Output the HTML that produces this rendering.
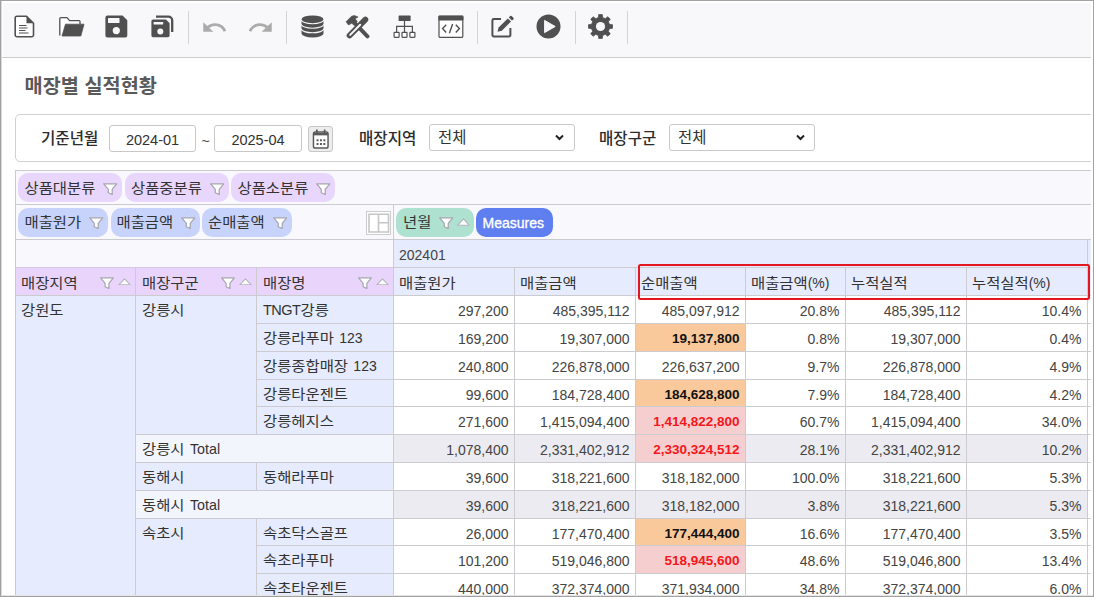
<!DOCTYPE html>
<html lang="ko"><head><meta charset="utf-8"><title>매장별 실적현황</title>
<style>
*{box-sizing:border-box;margin:0;padding:0}
html,body{width:1094px;height:597px;overflow:hidden;background:#fff}
body{position:relative;font-family:"Liberation Sans","Noto Sans CJK KR",sans-serif;font-size:14px;color:#333}
div,svg{position:absolute}
.h{display:inline-block;transform:scaleY(.91)}
.k{font-size:15.4px}
.num{text-align:right;font-size:14px;color:#444}
.b{font-weight:bold}
</style></head>
<body>
<div style="left:3px;top:3px;width:1088px;height:54px;background:#f8f8fa;"></div>
<div style="left:0px;top:57px;width:1094px;height:1px;background:#cdcdcd"></div>
<svg style="left:14px;top:15px;" width="21" height="23" viewBox="0 0 21 23" preserveAspectRatio="none">
<path d="M3 1.2 H12.5 L19.5 8.2 V20 a1.8 1.8 0 0 1 -1.8 1.8 H3 a1.8 1.8 0 0 1 -1.8 -1.8 V3 A1.8 1.8 0 0 1 3 1.2 Z" fill="#fff" stroke="#505050" stroke-width="1.6" stroke-linejoin="round"/>
<path d="M12.5 1.2 L19.5 8.2 H12.5 Z" fill="#505050"/>
<path d="M5 10.5 H12.5 M5 13 H13.5 M5 15.5 H11.5 M5 18 H14.5" stroke="#505050" stroke-width="1.1" fill="none"/></svg>
<svg style="left:58px;top:16px;" width="27" height="21" viewBox="0 0 27 21" preserveAspectRatio="none">
<path d="M1.8 19.5 V2.6 a1 1 0 0 1 1 -1 H9 l2.6 3 H21 a1 1 0 0 1 1 1 V8" fill="#fff" stroke="#505050" stroke-width="1.3" stroke-linejoin="round"/>
<path d="M7.5 8.2 H26 L22.8 20 H4 Z" fill="#505050" stroke="#505050" stroke-width="0.8" stroke-linejoin="round"/></svg>
<svg style="left:105px;top:15px;" width="23" height="23" viewBox="0 0 23 23" preserveAspectRatio="none">
<path d="M2.4 0.5 H17.5 L22.3 5.3 V20.4 a2 2 0 0 1 -2 2 H2.4 a2 2 0 0 1 -2 -2 V2.5 a2 2 0 0 1 2 -2 Z" fill="#505050"/>
<rect x="3" y="3" width="11.5" height="5" rx="0.6" fill="#f7f7f9"/>
<circle cx="11.3" cy="15.6" r="3.6" fill="#f7f7f9"/></svg>
<svg style="left:151px;top:15px;" width="23" height="23" viewBox="0 0 23 23" preserveAspectRatio="none">
<path d="M5 1.600 H17.400 a3.800 3.800 0 0 1 3.800 3.800 V17" fill="none" stroke="#505050" stroke-width="2.300"/>
<path d="M2 4.6 H15 L18.6 8.2 V20.6 a1.6 1.6 0 0 1 -1.6 1.6 H2 a1.6 1.6 0 0 1 -1.6 -1.6 V6.2 a1.6 1.6 0 0 1 1.6 -1.6 Z" fill="#505050"/>
<rect x="2.6" y="7" width="9.6" height="2.6" rx="0.4" fill="#f7f7f9"/>
<circle cx="9.3" cy="16.6" r="3" fill="#f7f7f9"/></svg>
<div style="left:188px;top:11px;width:1px;height:33px;background:#d4d4d6"></div>
<div style="left:286px;top:11px;width:1px;height:33px;background:#d4d4d6"></div>
<div style="left:477px;top:11px;width:1px;height:33px;background:#d4d4d6"></div>
<div style="left:575px;top:11px;width:1px;height:33px;background:#d4d4d6"></div>
<div style="left:627px;top:11px;width:1px;height:33px;background:#d4d4d6"></div>
<svg style="left:200.5px;top:14.5px;" width="27" height="25" viewBox="0 0 24 24" preserveAspectRatio="none"><path d="M12.5 8c-2.65 0-5.05.99-6.9 2.6L2 7v9h9l-3.62-3.62c1.39-1.16 3.16-1.88 5.12-1.88 3.54 0 6.55 2.31 7.6 5.5l2.37-.78C21.08 11.03 17.15 8 12.500 8z" fill="#ababab"/></svg>
<svg style="left:247.2px;top:14.5px;" width="27" height="25" viewBox="0 0 24 24" preserveAspectRatio="none"><path d="M18.4 10.6C16.55 8.99 14.15 8 11.5 8c-4.65 0-8.580 3.03-9.960 7.220L3.900 16c1.050-3.190 4.050-5.500 7.600-5.500 1.950 0 3.730.720 5.120 1.880L13 16h9V7l-3.600 3.600z" fill="#ababab"/></svg>
<svg style="left:301px;top:15px;" width="23" height="23" viewBox="0 0 23 23" preserveAspectRatio="none">
<path d="M0.500 4.400 a11 4 0 0 1 22 0 V18.400 a11 4 0 0 1 -22 0 Z" fill="#505050"/>
<path d="M0.300 4.700 a11.200 4 0 0 0 22.400 0 M0.300 9.200 a11.200 4 0 0 0 22.400 0 M0.300 13.800 a11.200 4 0 0 0 22.400 0" fill="none" stroke="#f7f7f9" stroke-width="1.100"/></svg>
<svg style="left:344.5px;top:14.6px;" width="26" height="24" viewBox="0 0 25 23" preserveAspectRatio="none">
<path d="M9.800 8.200 L21.600 20.400" stroke="#505050" stroke-width="3.800" stroke-linecap="round"/>
<path d="M1 6.500 L6.300 1.200 L9 0.500 L12.600 1.900 L9.700 3.700 L11.800 6 L8.600 9.700 L6.500 7.900 L3.400 9.600 Z" fill="#505050" stroke="#505050" stroke-width="0.600" stroke-linejoin="round"/>
<path d="M4.400 19.600 L19.600 4.400" stroke="#505050" stroke-width="5.600" stroke-linecap="round"/>
<path d="M5 19 L14.600 9.400" stroke="#f7f7f9" stroke-width="1.900" stroke-linecap="round"/></svg>
<svg style="left:393px;top:15px;" width="23" height="23" viewBox="0 0 23 23" preserveAspectRatio="none">
<rect x="5.600" y="0.600" width="12" height="5.400" rx="0.600" fill="#505050"/>
<path d="M11.500 6 V17 M3.600 17 V11.300 H19.400 V17" fill="none" stroke="#505050" stroke-width="1.200"/>
<rect x="1.100" y="17.300" width="5" height="5" rx="0.500" fill="#fff" stroke="#505050" stroke-width="1.200"/>
<rect x="9" y="17.300" width="5" height="5" rx="0.500" fill="#fff" stroke="#505050" stroke-width="1.200"/>
<rect x="16.900" y="17.300" width="5" height="5" rx="0.500" fill="#fff" stroke="#505050" stroke-width="1.200"/></svg>
<svg style="left:438px;top:15px;" width="26" height="23" viewBox="0 0 26 23" preserveAspectRatio="none">
<rect x="1" y="1.300" width="23.800" height="21" rx="0.800" fill="#fff" stroke="#505050" stroke-width="1.200"/>
<rect x="0.400" y="0.600" width="25" height="5" rx="0.800" fill="#505050"/>
<path d="M8.200 9.800 L4.600 13.600 L8.200 17.400 M17.800 9.800 L21.400 13.600 L17.800 17.400 M14.600 9 L11.400 18.200" fill="none" stroke="#505050" stroke-width="1.400"/></svg>
<svg style="left:491px;top:15px;" width="24" height="23" viewBox="0 0 24 23" preserveAspectRatio="none">
<path d="M10 4 H2.800 a1.400 1.400 0 0 0 -1.400 1.400 V20 a1.400 1.400 0 0 0 1.400 1.400 H18 a1.400 1.400 0 0 0 1.400 -1.400 V13" fill="none" stroke="#505050" stroke-width="2"/>
<path d="M6.500 16.800 L7.600 12.600 L16.800 3.400 L20 6.600 L10.800 15.800 Z" fill="#505050"/>
<path d="M17.800 2.400 L19.200 1 a1 1 0 0 1 1.400 0 L22.400 2.800 a1 1 0 0 1 0 1.400 L21 5.600 Z" fill="#505050"/></svg>
<svg style="left:536px;top:14px;" width="25" height="25" viewBox="0 0 25 25" preserveAspectRatio="none">
<circle cx="12.500" cy="12.500" r="12" fill="#505050"/>
<path d="M8.600 6.400 L19.200 12.500 L8.600 18.600 Z" fill="#f7f7f9" stroke="#f7f7f9" stroke-width="1" stroke-linejoin="round"/></svg>
<svg style="left:588px;top:14px;" width="25" height="25" viewBox="0 0 25 25" preserveAspectRatio="none">
<path d="M10.35 3.55 L10.78 0.42 L14.22 0.42 L14.65 3.55 L17.31 4.66 L19.83 2.74 L22.26 5.17 L20.34 7.69 L21.45 10.35 L24.58 10.78 L24.58 14.22 L21.45 14.65 L20.34 17.31 L22.26 19.83 L19.83 22.26 L17.31 20.34 L14.65 21.45 L14.22 24.58 L10.78 24.58 L10.35 21.45 L7.69 20.34 L5.17 22.26 L2.74 19.83 L4.66 17.31 L3.55 14.65 L0.42 14.22 L0.42 10.78 L3.55 10.35 L4.66 7.69 L2.74 5.17 L5.17 2.74 L7.69 4.66 Z" fill="#505050" stroke="#505050" stroke-width="0.800" stroke-linejoin="round"/>
<circle cx="12.500" cy="12.500" r="4.600" fill="#f7f7f9"/></svg>
<div class="b" style="left:24.6px;top:72px;height:28px;line-height:28px;white-space:nowrap;font-size:19.700px;color:#5a5a5a;">매장별 실적현황</div>
<div style="left:15px;top:114px;width:1090px;height:48px;background:#fff;border:1px solid #d0d0d0;border-radius:5px;"></div>
<div class="" style="left:41px;top:125px;height:28px;line-height:28px;white-space:nowrap;font-weight:500;font-size:15.600px;color:#2c2c2c;">기준년월</div>
<div style="left:109px;top:125px;width:87px;height:27px;border:1px solid #c8c8c8;border-radius:3px;background:#fff;"></div>
<div class="" style="left:109px;top:126px;height:28px;line-height:28px;white-space:nowrap;width:87px;font-size:14.500px;text-align:center;color:#333;">2024-01</div>
<div class="" style="left:201.5px;top:127px;height:28px;line-height:28px;white-space:nowrap;font-size:14px;color:#444;">~</div>
<div style="left:214px;top:125px;width:88px;height:27px;border:1px solid #c8c8c8;border-radius:3px;background:#fff;"></div>
<div class="" style="left:214px;top:126px;height:28px;line-height:28px;white-space:nowrap;width:88px;font-size:14.500px;text-align:center;color:#333;">2025-04</div>
<div style="left:308px;top:126px;width:25px;height:26px;background:#ededed;border:1px solid #c6c6c6;border-radius:3px;"></div>
<svg style="left:311.5px;top:129px;" width="17.5" height="20.5" viewBox="0 0 18 20" preserveAspectRatio="none">
<rect x="1.500" y="3" width="15" height="15.600" rx="1.800" fill="#fff" stroke="#5a5a5a" stroke-width="1.500"/>
<path d="M1.500 5 H16.500" stroke="#5a5a5a" stroke-width="2.400"/>
<path d="M5 0.600 V4 M13 0.600 V4" stroke="#5a5a5a" stroke-width="1.800"/>
<path d="M4.700 11 H14 M4.700 14.700 H14" stroke="#5a5a5a" stroke-width="2" stroke-dasharray="2 1.500"/></svg>
<div class="" style="left:359px;top:125px;height:28px;line-height:28px;white-space:nowrap;font-weight:500;font-size:15.600px;color:#2c2c2c;">매장지역</div>
<div style="left:429px;top:124px;width:146px;height:27px;border:1px solid #c8c8c8;border-radius:3px;background:#fff;"></div>
<div class="" style="left:438px;top:124px;height:27px;line-height:27px;white-space:nowrap;font-size:15.4px;color:#333;">전체</div>
<svg style="left:554px;top:133px;" width="11" height="9" viewBox="0 0 11 9" preserveAspectRatio="none"><path d="M2 2.500 L5.500 6 L9 2.500" fill="none" stroke="#222" stroke-width="2"/></svg>
<div class="" style="left:599px;top:125px;height:28px;line-height:28px;white-space:nowrap;font-weight:500;font-size:15.600px;color:#2c2c2c;">매장구군</div>
<div style="left:669px;top:124px;width:146px;height:27px;border:1px solid #c8c8c8;border-radius:3px;background:#fff;"></div>
<div class="" style="left:678px;top:124px;height:27px;line-height:27px;white-space:nowrap;font-size:15.4px;color:#333;">전체</div>
<svg style="left:795px;top:133px;" width="11" height="9" viewBox="0 0 11 9" preserveAspectRatio="none"><path d="M2 2.500 L5.500 6 L9 2.500" fill="none" stroke="#222" stroke-width="2"/></svg>
<div style="left:15px;top:170px;width:1078px;height:426px;background:#f9f9fd;"></div>
<div style="left:394px;top:240px;width:699px;height:55px;background:#e6ebfd;"></div>
<div style="left:16px;top:268px;width:377px;height:27px;background:#e9d5fc;"></div>
<div style="left:16px;top:296px;width:377px;height:300px;background:#e6ecfd;"></div>
<div style="left:394px;top:296px;width:699px;height:300px;background:#fff;"></div>
<div style="left:18px;top:173px;width:104px;height:29px;line-height:30px;background:#e9d6fc;color:#333;padding-left:6.5px;border-radius:10px;white-space:nowrap;"><span style="font-size:15.4px"><span class="h">상품대분류</span></span><svg style="position:static;vertical-align:-2px;margin-left:8px" width="14.5" height="12.5" viewBox="0 0 14 12.500" preserveAspectRatio="none"><path d="M0.700 0.800 H13.300 L8.900 6.300 V11.500 L5.100 9.700 V6.300 Z" fill="#fff" stroke="#a6a6ae" stroke-width="1.200" stroke-linejoin="round"/></svg></div>
<div style="left:124.5px;top:173px;width:104px;height:29px;line-height:30px;background:#e9d6fc;color:#333;padding-left:6.5px;border-radius:10px;white-space:nowrap;"><span style="font-size:15.4px"><span class="h">상품중분류</span></span><svg style="position:static;vertical-align:-2px;margin-left:8px" width="14.5" height="12.5" viewBox="0 0 14 12.500" preserveAspectRatio="none"><path d="M0.700 0.800 H13.300 L8.900 6.300 V11.500 L5.100 9.700 V6.300 Z" fill="#fff" stroke="#a6a6ae" stroke-width="1.200" stroke-linejoin="round"/></svg></div>
<div style="left:231px;top:173px;width:104px;height:29px;line-height:30px;background:#e9d6fc;color:#333;padding-left:6.5px;border-radius:10px;white-space:nowrap;"><span style="font-size:15.4px"><span class="h">상품소분류</span></span><svg style="position:static;vertical-align:-2px;margin-left:8px" width="14.5" height="12.5" viewBox="0 0 14 12.500" preserveAspectRatio="none"><path d="M0.700 0.800 H13.300 L8.900 6.300 V11.500 L5.100 9.700 V6.300 Z" fill="#fff" stroke="#a6a6ae" stroke-width="1.200" stroke-linejoin="round"/></svg></div>
<div style="left:18px;top:208px;width:89.5px;height:29px;line-height:28px;background:#c8d3fb;color:#333;padding-left:6.5px;border-radius:10px;white-space:nowrap;"><span style="font-size:15.4px"><span class="h">매출원가</span></span><svg style="position:static;vertical-align:-2px;margin-left:8px" width="14.5" height="12.5" viewBox="0 0 14 12.500" preserveAspectRatio="none"><path d="M0.700 0.800 H13.300 L8.900 6.300 V11.500 L5.100 9.700 V6.300 Z" fill="#fff" stroke="#a6a6ae" stroke-width="1.200" stroke-linejoin="round"/></svg></div>
<div style="left:110.5px;top:208px;width:89px;height:29px;line-height:28px;background:#c8d3fb;color:#333;padding-left:6px;border-radius:10px;white-space:nowrap;"><span style="font-size:15.4px"><span class="h">매출금액</span></span><svg style="position:static;vertical-align:-2px;margin-left:8px" width="14.5" height="12.5" viewBox="0 0 14 12.500" preserveAspectRatio="none"><path d="M0.700 0.800 H13.300 L8.900 6.300 V11.500 L5.100 9.700 V6.300 Z" fill="#fff" stroke="#a6a6ae" stroke-width="1.200" stroke-linejoin="round"/></svg></div>
<div style="left:202px;top:208px;width:90px;height:29px;line-height:28px;background:#c8d3fb;color:#333;padding-left:6px;border-radius:10px;white-space:nowrap;"><span style="font-size:15.4px"><span class="h">순매출액</span></span><svg style="position:static;vertical-align:-2px;margin-left:8px" width="14.5" height="12.5" viewBox="0 0 14 12.500" preserveAspectRatio="none"><path d="M0.700 0.800 H13.300 L8.900 6.300 V11.500 L5.100 9.700 V6.300 Z" fill="#fff" stroke="#a6a6ae" stroke-width="1.200" stroke-linejoin="round"/></svg></div>
<svg style="left:366px;top:211px;" width="25" height="24" viewBox="0 0 25 24" preserveAspectRatio="none"><rect x="0.500" y="0.500" width="24" height="23" fill="#fff" stroke="#cdcdcd" stroke-width="1"/>
<path d="M3 3.200 H22.500 V21 H3 Z M12.500 3.200 V21 M12.500 11.700 H22.500" fill="none" stroke="#c6c6c6" stroke-width="1.600"/></svg>
<div style="left:396px;top:208px;width:78px;height:29px;line-height:28px;background:#afe1d1;color:#333;padding-left:7px;border-radius:10px;white-space:nowrap;"><span style="font-size:15.4px"><span class="h">년월</span></span><svg style="position:static;vertical-align:-2px;margin-left:8px" width="14.5" height="12.5" viewBox="0 0 14 12.500" preserveAspectRatio="none"><path d="M0.700 0.800 H13.300 L8.900 6.300 V11.500 L5.100 9.700 V6.300 Z" fill="#fff" stroke="#a6a6ae" stroke-width="1.200" stroke-linejoin="round"/></svg><svg style="position:static;vertical-align:1px;margin-left:3px" width="13" height="8" viewBox="0 0 13 8" preserveAspectRatio="none"><path d="M0.800 7.200 L6.500 0.900 L12.200 7.200 Z" fill="#fff" stroke="#b4b4bc" stroke-width="1.100" stroke-linejoin="round"/></svg></div>
<div style="left:476px;top:208px;width:77px;height:29px;line-height:31px;background:#5f7ef0;color:#fff;padding-left:6.5px;border-radius:10px;white-space:nowrap;-webkit-text-stroke:0.350px #fff;"><span style="font-size:14px">Measures</span></div>
<div style="left:15px;top:170px;width:1078px;height:1px;background:#cbcbd0"></div>
<div style="left:15px;top:204px;width:1078px;height:1px;background:#cbcbd0"></div>
<div style="left:15px;top:239px;width:1078px;height:1px;background:#cbcbd0"></div>
<div style="left:393px;top:267px;width:700px;height:1px;background:#cbcbd0"></div>
<div style="left:15px;top:267px;width:378px;height:1px;background:#d5c8e2"></div>
<div style="left:15px;top:295px;width:1078px;height:1px;background:#cbcbd0"></div>
<div style="left:15px;top:170px;width:1px;height:426px;background:#cbcbd0"></div>
<div style="left:393px;top:204px;width:1px;height:392px;background:#cbcbd0"></div>
<div style="left:1087px;top:239px;width:1px;height:357px;background:#cbcbd0"></div>
<div style="left:514px;top:268px;width:1px;height:328px;background:#cbcbd0"></div>
<div style="left:635px;top:268px;width:1px;height:328px;background:#cbcbd0"></div>
<div style="left:745px;top:268px;width:1px;height:328px;background:#cbcbd0"></div>
<div style="left:845px;top:268px;width:1px;height:328px;background:#cbcbd0"></div>
<div style="left:966px;top:268px;width:1px;height:328px;background:#cbcbd0"></div>
<div style="left:135px;top:268px;width:1px;height:28px;background:#cbcbd0"></div>
<div style="left:256px;top:268px;width:1px;height:28px;background:#cbcbd0"></div>
<div class="" style="left:399px;top:240px;height:31px;line-height:31px;white-space:nowrap;font-size:14px;color:#444;">202401</div>
<div class="k" style="left:399px;top:268px;height:30px;line-height:30px;white-space:nowrap;"><span class="h">매출원가</span></div>
<div class="k" style="left:520px;top:268px;height:30px;line-height:30px;white-space:nowrap;"><span class="h">매출금액</span></div>
<div class="k" style="left:641px;top:268px;height:30px;line-height:30px;white-space:nowrap;"><span class="h">순매출액</span></div>
<div class="k" style="left:751px;top:268px;height:30px;line-height:30px;white-space:nowrap;"><span class="h">매출금액</span><span style="font-size:14px">(%)</span></div>
<div class="k" style="left:851px;top:268px;height:30px;line-height:30px;white-space:nowrap;"><span class="h">누적실적</span></div>
<div class="k" style="left:972px;top:268px;height:30px;line-height:30px;white-space:nowrap;"><span class="h">누적실적</span><span style="font-size:14px">(%)</span></div>
<div class="k" style="left:21px;top:268px;height:30px;line-height:30px;white-space:nowrap;"><span class="h">매장지역</span></div>
<div style="left:99.7px;top:268px;height:28px;line-height:29px;white-space:nowrap"><svg style="position:static;vertical-align:-2px;margin-left:0px" width="14" height="12.5" viewBox="0 0 14 12.500" preserveAspectRatio="none"><path d="M0.700 0.800 H13.300 L8.900 6.300 V11.500 L5.100 9.700 V6.300 Z" fill="#fff" stroke="#a6a6ae" stroke-width="1.200" stroke-linejoin="round"/></svg><svg style="position:static;vertical-align:2px;margin-left:4px" width="13" height="7.5" viewBox="0 0 13 8" preserveAspectRatio="none"><path d="M0.800 7.200 L6.500 0.900 L12.200 7.200 Z" fill="#fff" stroke="#b4b4bc" stroke-width="1.100" stroke-linejoin="round"/></svg></div>
<div class="k" style="left:142px;top:268px;height:30px;line-height:30px;white-space:nowrap;"><span class="h">매장구군</span></div>
<div style="left:220.7px;top:268px;height:28px;line-height:29px;white-space:nowrap"><svg style="position:static;vertical-align:-2px;margin-left:0px" width="14" height="12.5" viewBox="0 0 14 12.500" preserveAspectRatio="none"><path d="M0.700 0.800 H13.300 L8.900 6.300 V11.500 L5.100 9.700 V6.300 Z" fill="#fff" stroke="#a6a6ae" stroke-width="1.200" stroke-linejoin="round"/></svg><svg style="position:static;vertical-align:2px;margin-left:4px" width="13" height="7.5" viewBox="0 0 13 8" preserveAspectRatio="none"><path d="M0.800 7.200 L6.500 0.900 L12.200 7.200 Z" fill="#fff" stroke="#b4b4bc" stroke-width="1.100" stroke-linejoin="round"/></svg></div>
<div class="k" style="left:263px;top:268px;height:30px;line-height:30px;white-space:nowrap;"><span class="h">매장명</span></div>
<div style="left:357.7px;top:268px;height:28px;line-height:29px;white-space:nowrap"><svg style="position:static;vertical-align:-2px;margin-left:0px" width="14" height="12.5" viewBox="0 0 14 12.500" preserveAspectRatio="none"><path d="M0.700 0.800 H13.300 L8.900 6.300 V11.500 L5.100 9.700 V6.300 Z" fill="#fff" stroke="#a6a6ae" stroke-width="1.200" stroke-linejoin="round"/></svg><svg style="position:static;vertical-align:2px;margin-left:4px" width="13" height="7.5" viewBox="0 0 13 8" preserveAspectRatio="none"><path d="M0.800 7.200 L6.500 0.900 L12.200 7.200 Z" fill="#fff" stroke="#b4b4bc" stroke-width="1.100" stroke-linejoin="round"/></svg></div>
<div class="k" style="left:263px;top:296px;height:28px;line-height:28px;white-space:nowrap;"><span style="font-size:14.500px;letter-spacing:-0.500px">TNGT</span><span class="h">강릉</span></div>
<div style="left:256px;top:295px;width:837px;height:1px;background:#cbcbd0"></div>
<div class="num" style="left:394px;top:297px;height:28px;line-height:28px;white-space:nowrap;width:114.5px;">297,200</div>
<div class="num" style="left:515px;top:297px;height:28px;line-height:28px;white-space:nowrap;width:114.5px;">485,395,112</div>
<div class="num" style="left:636px;top:297px;height:28px;line-height:28px;white-space:nowrap;width:103.5px;">485,097,912</div>
<div class="num" style="left:746px;top:297px;height:28px;line-height:28px;white-space:nowrap;width:93.5px;">20.8%</div>
<div class="num" style="left:846px;top:297px;height:28px;line-height:28px;white-space:nowrap;width:114.5px;">485,395,112</div>
<div class="num" style="left:967px;top:297px;height:28px;line-height:28px;white-space:nowrap;width:114.5px;">10.4%</div>
<div class="k" style="left:263px;top:324px;height:28px;line-height:28px;white-space:nowrap;"><span class="h">강릉라푸마</span><span style="font-size:14px;word-spacing:1.500px"> 123</span></div>
<div style="left:256px;top:323px;width:837px;height:1px;background:#cbcbd0"></div>
<div style="left:636px;top:324px;width:109px;height:27px;background:#f9c99b;"></div>
<div class="num" style="left:394px;top:325px;height:28px;line-height:28px;white-space:nowrap;width:114.5px;">169,200</div>
<div class="num" style="left:515px;top:325px;height:28px;line-height:28px;white-space:nowrap;width:114.5px;">19,307,000</div>
<div class="num b" style="left:636px;top:325px;height:28px;line-height:28px;white-space:nowrap;width:103.5px;color:#111;font-size:13.500px;">19,137,800</div>
<div class="num" style="left:746px;top:325px;height:28px;line-height:28px;white-space:nowrap;width:93.5px;">0.8%</div>
<div class="num" style="left:846px;top:325px;height:28px;line-height:28px;white-space:nowrap;width:114.5px;">19,307,000</div>
<div class="num" style="left:967px;top:325px;height:28px;line-height:28px;white-space:nowrap;width:114.5px;">0.4%</div>
<div class="k" style="left:263px;top:352px;height:28px;line-height:28px;white-space:nowrap;"><span class="h">강릉종합매장</span><span style="font-size:14px;word-spacing:1.500px"> 123</span></div>
<div style="left:256px;top:351px;width:837px;height:1px;background:#cbcbd0"></div>
<div class="num" style="left:394px;top:353px;height:28px;line-height:28px;white-space:nowrap;width:114.5px;">240,800</div>
<div class="num" style="left:515px;top:353px;height:28px;line-height:28px;white-space:nowrap;width:114.5px;">226,878,000</div>
<div class="num" style="left:636px;top:353px;height:28px;line-height:28px;white-space:nowrap;width:103.5px;">226,637,200</div>
<div class="num" style="left:746px;top:353px;height:28px;line-height:28px;white-space:nowrap;width:93.5px;">9.7%</div>
<div class="num" style="left:846px;top:353px;height:28px;line-height:28px;white-space:nowrap;width:114.5px;">226,878,000</div>
<div class="num" style="left:967px;top:353px;height:28px;line-height:28px;white-space:nowrap;width:114.5px;">4.9%</div>
<div class="k" style="left:263px;top:380px;height:28px;line-height:28px;white-space:nowrap;"><span class="h">강릉타운젠트</span></div>
<div style="left:256px;top:379px;width:837px;height:1px;background:#cbcbd0"></div>
<div style="left:636px;top:380px;width:109px;height:26px;background:#f9c99b;"></div>
<div class="num" style="left:394px;top:381px;height:28px;line-height:28px;white-space:nowrap;width:114.5px;">99,600</div>
<div class="num" style="left:515px;top:381px;height:28px;line-height:28px;white-space:nowrap;width:114.5px;">184,728,400</div>
<div class="num b" style="left:636px;top:381px;height:28px;line-height:28px;white-space:nowrap;width:103.5px;color:#111;font-size:13.500px;">184,628,800</div>
<div class="num" style="left:746px;top:381px;height:28px;line-height:28px;white-space:nowrap;width:93.5px;">7.9%</div>
<div class="num" style="left:846px;top:381px;height:28px;line-height:28px;white-space:nowrap;width:114.5px;">184,728,400</div>
<div class="num" style="left:967px;top:381px;height:28px;line-height:28px;white-space:nowrap;width:114.5px;">4.2%</div>
<div class="k" style="left:263px;top:407px;height:28px;line-height:28px;white-space:nowrap;"><span class="h">강릉헤지스</span></div>
<div style="left:256px;top:406px;width:837px;height:1px;background:#cbcbd0"></div>
<div style="left:636px;top:407px;width:109px;height:27px;background:#f5cfd0;"></div>
<div class="num" style="left:394px;top:408px;height:28px;line-height:28px;white-space:nowrap;width:114.5px;">271,600</div>
<div class="num" style="left:515px;top:408px;height:28px;line-height:28px;white-space:nowrap;width:114.5px;">1,415,094,400</div>
<div class="num b" style="left:636px;top:408px;height:28px;line-height:28px;white-space:nowrap;width:103.5px;color:#f6161b;font-size:13.500px;">1,414,822,800</div>
<div class="num" style="left:746px;top:408px;height:28px;line-height:28px;white-space:nowrap;width:93.5px;">60.7%</div>
<div class="num" style="left:846px;top:408px;height:28px;line-height:28px;white-space:nowrap;width:114.5px;">1,415,094,400</div>
<div class="num" style="left:967px;top:408px;height:28px;line-height:28px;white-space:nowrap;width:114.5px;">34.0%</div>
<div style="left:136px;top:435px;width:257px;height:27px;background:#f3f5fd;"></div>
<div style="left:394px;top:435px;width:693px;height:27px;background:#ebebf1;"></div>
<div class="k" style="left:142px;top:435px;height:28px;line-height:28px;white-space:nowrap;"><span class="h">강릉시</span><span style="font-size:14px;word-spacing:1.500px"> </span><span style="font-size:14.3px">Total</span></div>
<div style="left:135px;top:434px;width:958px;height:1px;background:#cbcbd0"></div>
<div style="left:135px;top:462px;width:958px;height:1px;background:#cbcbd0"></div>
<div style="left:636px;top:435px;width:109px;height:27px;background:#f5cfd0;"></div>
<div class="num" style="left:394px;top:436px;height:28px;line-height:28px;white-space:nowrap;width:114.5px;">1,078,400</div>
<div class="num" style="left:515px;top:436px;height:28px;line-height:28px;white-space:nowrap;width:114.5px;">2,331,402,912</div>
<div class="num b" style="left:636px;top:436px;height:28px;line-height:28px;white-space:nowrap;width:103.5px;color:#f6161b;font-size:13.500px;">2,330,324,512</div>
<div class="num" style="left:746px;top:436px;height:28px;line-height:28px;white-space:nowrap;width:93.5px;">28.1%</div>
<div class="num" style="left:846px;top:436px;height:28px;line-height:28px;white-space:nowrap;width:114.5px;">2,331,402,912</div>
<div class="num" style="left:967px;top:436px;height:28px;line-height:28px;white-space:nowrap;width:114.5px;">10.2%</div>
<div class="k" style="left:263px;top:463px;height:28px;line-height:28px;white-space:nowrap;"><span class="h">동해라푸마</span></div>
<div style="left:256px;top:462px;width:837px;height:1px;background:#cbcbd0"></div>
<div class="num" style="left:394px;top:464px;height:28px;line-height:28px;white-space:nowrap;width:114.5px;">39,600</div>
<div class="num" style="left:515px;top:464px;height:28px;line-height:28px;white-space:nowrap;width:114.5px;">318,221,600</div>
<div class="num" style="left:636px;top:464px;height:28px;line-height:28px;white-space:nowrap;width:103.5px;">318,182,000</div>
<div class="num" style="left:746px;top:464px;height:28px;line-height:28px;white-space:nowrap;width:93.5px;">100.0%</div>
<div class="num" style="left:846px;top:464px;height:28px;line-height:28px;white-space:nowrap;width:114.5px;">318,221,600</div>
<div class="num" style="left:967px;top:464px;height:28px;line-height:28px;white-space:nowrap;width:114.5px;">5.3%</div>
<div style="left:136px;top:491px;width:257px;height:27px;background:#f3f5fd;"></div>
<div style="left:394px;top:491px;width:693px;height:27px;background:#ebebf1;"></div>
<div class="k" style="left:142px;top:491px;height:28px;line-height:28px;white-space:nowrap;"><span class="h">동해시</span><span style="font-size:14px;word-spacing:1.500px"> </span><span style="font-size:14.3px">Total</span></div>
<div style="left:135px;top:490px;width:958px;height:1px;background:#cbcbd0"></div>
<div style="left:135px;top:518px;width:958px;height:1px;background:#cbcbd0"></div>
<div class="num" style="left:394px;top:492px;height:28px;line-height:28px;white-space:nowrap;width:114.5px;">39,600</div>
<div class="num" style="left:515px;top:492px;height:28px;line-height:28px;white-space:nowrap;width:114.5px;">318,221,600</div>
<div class="num" style="left:636px;top:492px;height:28px;line-height:28px;white-space:nowrap;width:103.5px;">318,182,000</div>
<div class="num" style="left:746px;top:492px;height:28px;line-height:28px;white-space:nowrap;width:93.5px;">3.8%</div>
<div class="num" style="left:846px;top:492px;height:28px;line-height:28px;white-space:nowrap;width:114.5px;">318,221,600</div>
<div class="num" style="left:967px;top:492px;height:28px;line-height:28px;white-space:nowrap;width:114.5px;">5.3%</div>
<div class="k" style="left:263px;top:519px;height:28px;line-height:28px;white-space:nowrap;"><span class="h">속초닥스골프</span></div>
<div style="left:256px;top:518px;width:837px;height:1px;background:#cbcbd0"></div>
<div style="left:636px;top:519px;width:109px;height:26px;background:#f9c99b;"></div>
<div class="num" style="left:394px;top:520px;height:28px;line-height:28px;white-space:nowrap;width:114.5px;">26,000</div>
<div class="num" style="left:515px;top:520px;height:28px;line-height:28px;white-space:nowrap;width:114.5px;">177,470,400</div>
<div class="num b" style="left:636px;top:520px;height:28px;line-height:28px;white-space:nowrap;width:103.5px;color:#111;font-size:13.500px;">177,444,400</div>
<div class="num" style="left:746px;top:520px;height:28px;line-height:28px;white-space:nowrap;width:93.5px;">16.6%</div>
<div class="num" style="left:846px;top:520px;height:28px;line-height:28px;white-space:nowrap;width:114.5px;">177,470,400</div>
<div class="num" style="left:967px;top:520px;height:28px;line-height:28px;white-space:nowrap;width:114.5px;">3.5%</div>
<div class="k" style="left:263px;top:546px;height:28px;line-height:28px;white-space:nowrap;"><span class="h">속초라푸마</span></div>
<div style="left:256px;top:545px;width:837px;height:1px;background:#cbcbd0"></div>
<div style="left:636px;top:546px;width:109px;height:27px;background:#f5cfd0;"></div>
<div class="num" style="left:394px;top:547px;height:28px;line-height:28px;white-space:nowrap;width:114.5px;">101,200</div>
<div class="num" style="left:515px;top:547px;height:28px;line-height:28px;white-space:nowrap;width:114.5px;">519,046,800</div>
<div class="num b" style="left:636px;top:547px;height:28px;line-height:28px;white-space:nowrap;width:103.5px;color:#f6161b;font-size:13.500px;">518,945,600</div>
<div class="num" style="left:746px;top:547px;height:28px;line-height:28px;white-space:nowrap;width:93.5px;">48.6%</div>
<div class="num" style="left:846px;top:547px;height:28px;line-height:28px;white-space:nowrap;width:114.5px;">519,046,800</div>
<div class="num" style="left:967px;top:547px;height:28px;line-height:28px;white-space:nowrap;width:114.5px;">13.4%</div>
<div class="k" style="left:263px;top:574px;height:28px;line-height:28px;white-space:nowrap;"><span class="h">속초타운젠트</span></div>
<div style="left:256px;top:573px;width:837px;height:1px;background:#cbcbd0"></div>
<div class="num" style="left:394px;top:575px;height:28px;line-height:28px;white-space:nowrap;width:114.5px;">440,000</div>
<div class="num" style="left:515px;top:575px;height:28px;line-height:28px;white-space:nowrap;width:114.5px;">372,374,000</div>
<div class="num" style="left:636px;top:575px;height:28px;line-height:28px;white-space:nowrap;width:103.5px;">371,934,000</div>
<div class="num" style="left:746px;top:575px;height:28px;line-height:28px;white-space:nowrap;width:93.5px;">34.8%</div>
<div class="num" style="left:846px;top:575px;height:28px;line-height:28px;white-space:nowrap;width:114.5px;">372,374,000</div>
<div class="num" style="left:967px;top:575px;height:28px;line-height:28px;white-space:nowrap;width:114.5px;">6.0%</div>
<div class="k" style="left:21px;top:296px;height:28px;line-height:28px;white-space:nowrap;"><span class="h">강원도</span></div>
<div class="k" style="left:142px;top:296px;height:28px;line-height:28px;white-space:nowrap;"><span class="h">강릉시</span></div>
<div class="k" style="left:142px;top:463px;height:28px;line-height:28px;white-space:nowrap;"><span class="h">동해시</span></div>
<div class="k" style="left:142px;top:519px;height:28px;line-height:28px;white-space:nowrap;"><span class="h">속초시</span></div>
<div style="left:135px;top:295px;width:1px;height:301px;background:#cbcbd0"></div>
<div style="left:256px;top:295px;width:1px;height:139px;background:#cbcbd0"></div>
<div style="left:256px;top:462px;width:1px;height:28px;background:#cbcbd0"></div>
<div style="left:256px;top:518px;width:1px;height:78px;background:#cbcbd0"></div>
<div style="left:135px;top:518px;width:958px;height:1px;background:#cbcbd0"></div>
<div style="left:514px;top:295px;width:1px;height:301px;background:#cbcbd0"></div>
<div style="left:635px;top:295px;width:1px;height:301px;background:#cbcbd0"></div>
<div style="left:745px;top:295px;width:1px;height:301px;background:#cbcbd0"></div>
<div style="left:845px;top:295px;width:1px;height:301px;background:#cbcbd0"></div>
<div style="left:966px;top:295px;width:1px;height:301px;background:#cbcbd0"></div>
<div style="left:638px;top:264px;width:452px;height:36px;border:2px solid #e41620;border-radius:2.500px;"></div>
<div style="left:0px;top:0px;width:1094px;height:3px;background:#fff;"></div>
<div style="left:1091px;top:0px;width:3px;height:597px;background:#fff;"></div>
<div style="left:0px;top:0px;width:1094px;height:1px;background:#a2a2a2;"></div>
<div style="left:0px;top:0px;width:1px;height:597px;background:#a0a0a0;"></div>
<div style="left:1px;top:1px;width:1px;height:595px;background:#d9d9d9;"></div>
<div style="left:1093px;top:0px;width:1px;height:597px;background:#a2a2a2;"></div>
<div style="left:0px;top:596px;width:1094px;height:1px;background:#a2a2a2;"></div>
<div style="left:1px;top:595px;width:1092px;height:1px;background:#e4e4e4;"></div>
</body></html>
